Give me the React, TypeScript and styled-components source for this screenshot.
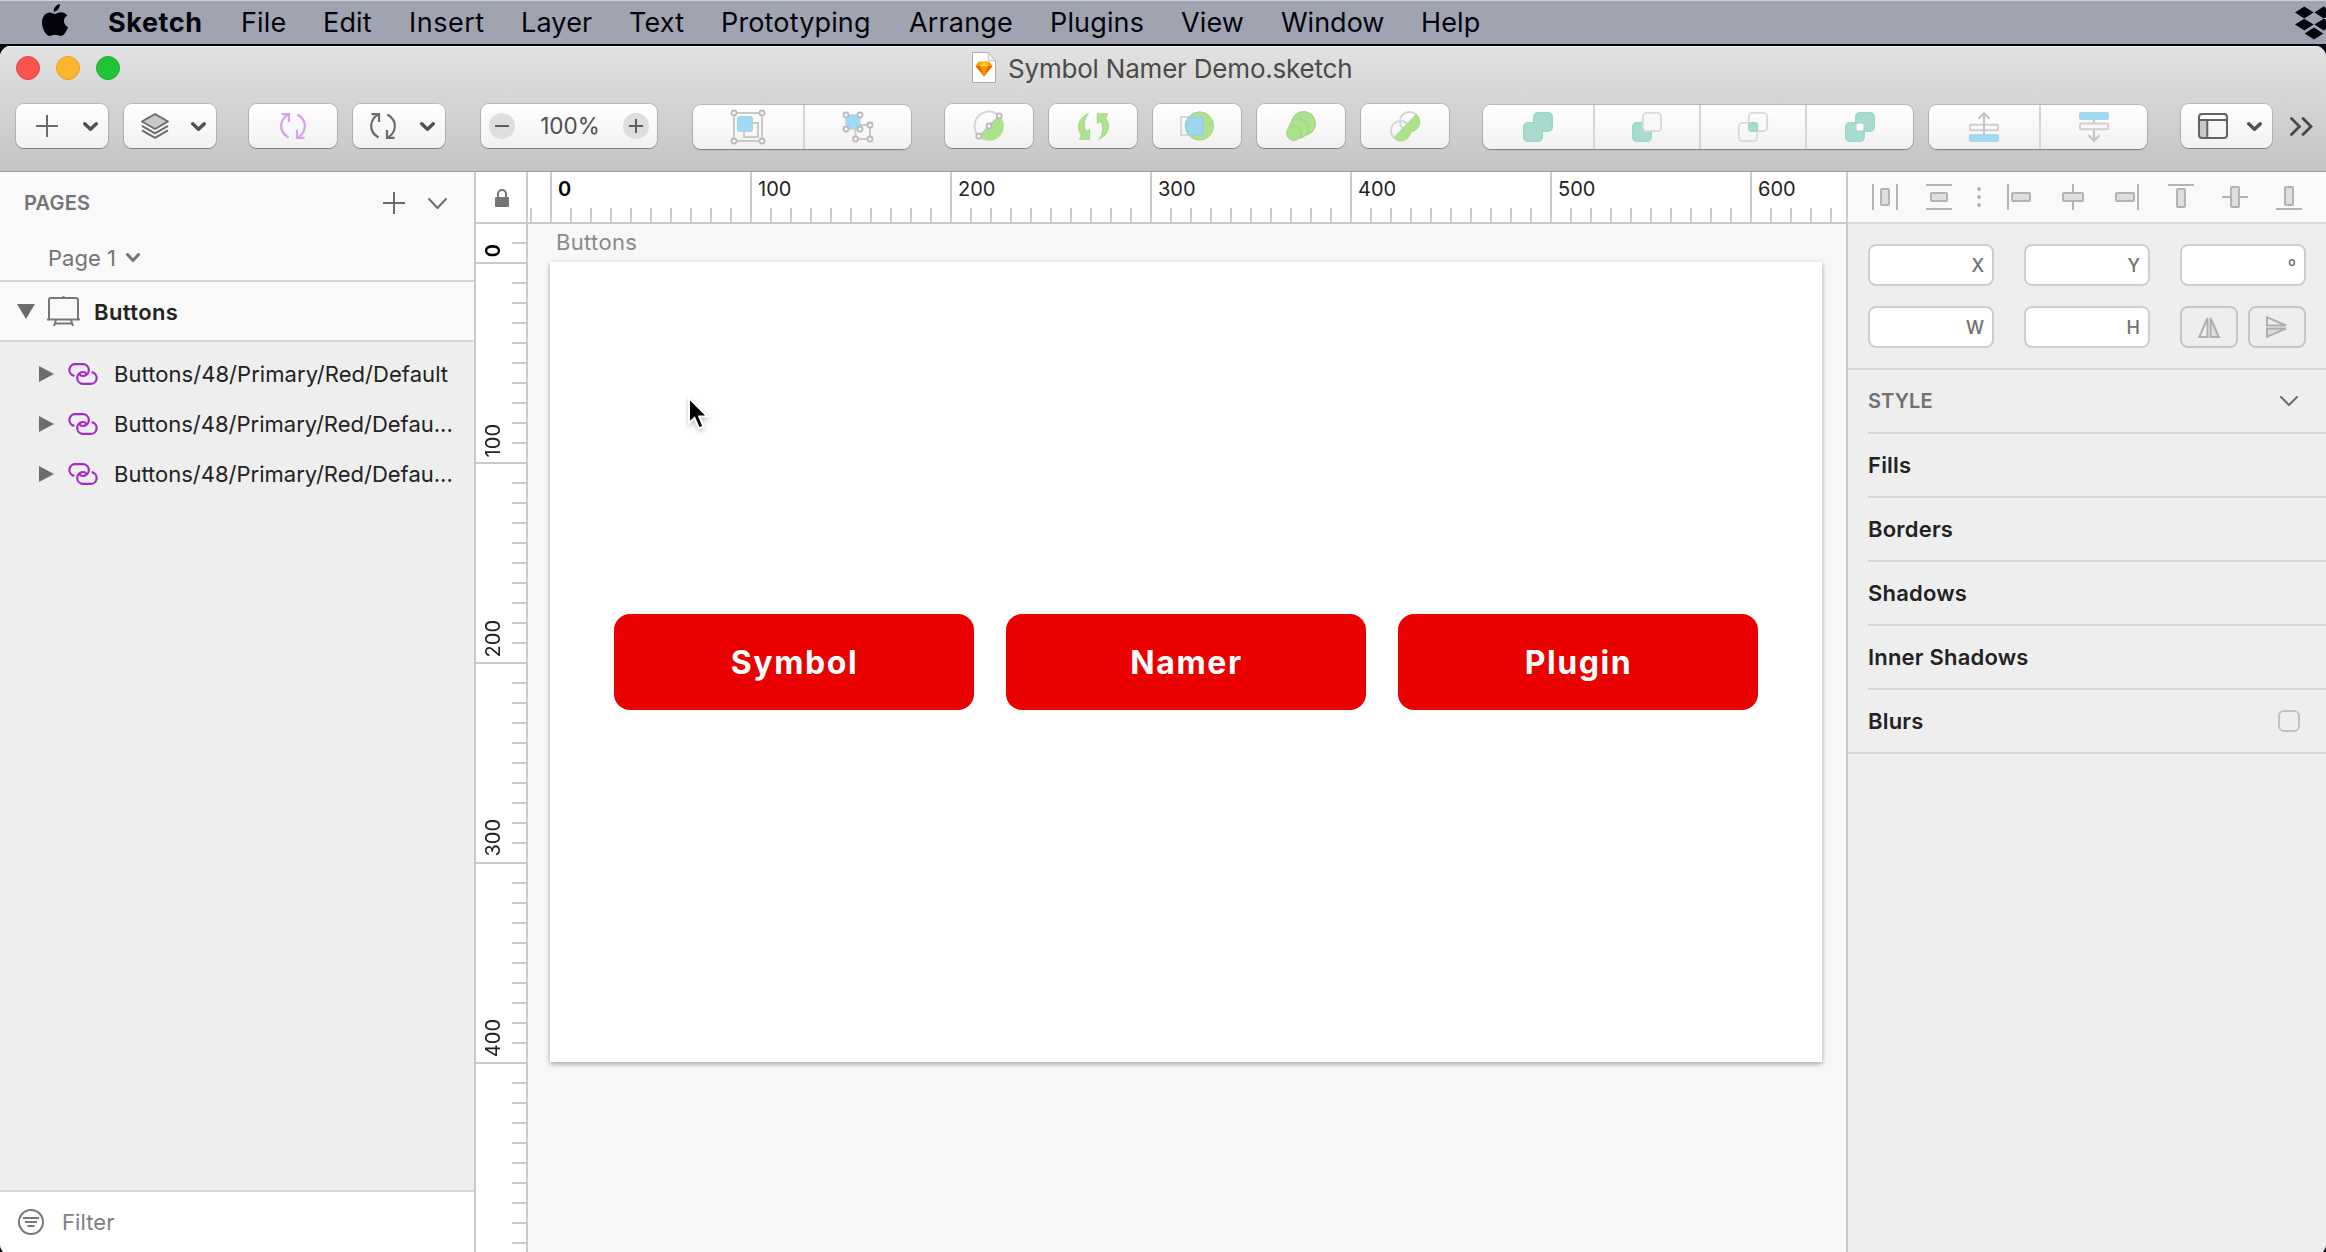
import React from "react";
import styled, { createGlobalStyle } from "styled-components";

const Global = createGlobalStyle`
  *, *::before, *::after { box-sizing: border-box; }
  html, body { margin: 0; padding: 0; background: #05060f; overflow: hidden; }
  body {
    font-family: Inter, "Liberation Sans", sans-serif;
    font-size: 22px;
    line-height: 1;
    color: #222;
  }
`;

const LINE = "#c9c9c9";
const GREEN = "#ade28d";
const BLUE = "#a0dbf5";
const TEAL = "#a9dbd2";
const MUTE = "#c9c9c9";

/* ---------- shell ---------- */

const Screen = styled.div`
  width: 2326px;
  height: 1252px;
  overflow: hidden;
  display: flex;
  flex-direction: column;
`;

const MenuBar = styled.header`
  flex: none;
  height: 44px;
  display: flex;
  align-items: center;
  padding-left: 42px;
  background: #a0a4b0;
  border-top: 1px solid #ccd0da;
  color: #04040e;
  font-size: 27px;
  overflow: hidden;
`;

const AppleMark = styled.svg`
  flex: none;
  width: 26px;
  height: 33px;
  margin: -5px 40px 0 0;
`;

const MenuItem = styled.span<{ $w: number; $ls?: number; $bold?: boolean }>`
  flex: none;
  width: ${(p) => p.$w}px;
  letter-spacing: ${(p) => p.$ls ?? 0.15}px;
  font-weight: ${(p) => (p.$bold ? 700 : 400)};
  white-space: nowrap;
`;

const DropboxMark = styled.svg`
  flex: none;
  width: 38px;
  height: 34px;
  margin: 1px -7px 0 auto;
`;

const Window = styled.main`
  flex: none;
  height: 1210px;
  margin-top: 2px;
  display: flex;
  flex-direction: column;
  border-radius: 11px 11px 12px 12px;
  overflow: hidden;
  background: #eee;
`;

const Chrome = styled.div`
  flex: none;
  height: 126px;
  background: linear-gradient(#e2e2e2, #c4c4c4);
  border-bottom: 1px solid #9c9c9c;
  box-shadow: inset 0 1px 0 #f3f3f3;
`;

const TitleRow = styled.div`
  height: 58px;
  display: flex;
  align-items: flex-start;
  padding: 6px 0 0 16px;
`;

const Lights = styled.div`
  display: flex;
  gap: 16px;
  margin-top: 4px;
  width: 956px;
`;

const Light = styled.i<{ $c: string; $b: string }>`
  width: 24px;
  height: 24px;
  border-radius: 50%;
  background: ${(p) => p.$c};
  border: 1px solid ${(p) => p.$b};
`;

const Title = styled.h1`
  margin: 4px 0 0 12px;
  font-size: 26px;
  font-weight: 400;
  letter-spacing: -0.2px;
  color: #4b4b4b;
`;

/* ---------- toolbar ---------- */

const Toolbar = styled.div`
  display: flex;
  align-items: flex-start;
`;

const Button = styled.div<{ $w: number; $gap: number; $drop?: boolean; $inset?: number }>`
  flex: none;
  width: ${(p) => p.$w}px;
  height: 44px;
  margin-left: ${(p) => p.$gap}px;
  padding: ${(p) => (p.$drop ? `0 10px 0 ${p.$inset ?? 17}px` : "0")};
  display: flex;
  align-items: center;
  justify-content: ${(p) => (p.$drop ? "space-between" : "center")};
  border-radius: 8px;
  background: linear-gradient(#fff, #f1f1f1);
  box-shadow: 0 0 0 1px rgba(0, 0, 0, 0.13), 0 1px 1px 0 rgba(0, 0, 0, 0.28);
`;

const Segmented = styled(Button)`
  margin-top: 1px;
  overflow: hidden;
`;

const Segment = styled.div<{ $w?: number }>`
  ${(p) => (p.$w ? `flex: none; width: ${p.$w}px;` : "flex: 1;")}
  height: 100%;
  display: flex;
  align-items: center;
  justify-content: center;
  & + & { border-left: 2px solid #d6d6d6; }
`;

const ZoomBox = styled(Button)`
  justify-content: space-between;
  padding: 0 8px;
  color: #4e4e4e;
`;

const ZoomValue = styled.span`
  padding-left: 2px;
  font-size: 22.5px;
`;

const Overflow = styled.div`
  flex: none;
  height: 44px;
  margin-left: 18px;
  display: flex;
  align-items: center;
`;

const Svg = styled.svg`
  flex: none;
  display: block;
  overflow: visible;
`;

type IconProps = { w: number; h: number; children: React.ReactNode };
const Icon = ({ w, h, children }: IconProps) => (
  <Svg width={w} height={h} viewBox={`0 0 ${w} ${h}`} fill="none">
    {children}
  </Svg>
);

const Chevron = ({ w = 15, h = 9, s = 3.4, c = "#505050" }) => (
  <Icon w={w} h={h}>
    <path
      d={`M${s / 2} ${s / 2}L${w / 2} ${h - s / 2}L${w - s / 2} ${s / 2}`}
      stroke={c}
      strokeWidth={s}
      strokeLinecap="round"
      strokeLinejoin="round"
    />
  </Icon>
);

const Plus = ({ size = 22, s = 2, c = "#6b6b6b" }) => (
  <Icon w={size} h={size}>
    <path d={`M${size / 2} 0V${size}M0 ${size / 2}H${size}`} stroke={c} strokeWidth={s} />
  </Icon>
);

const Rotate = ({ c }: { c: string }) => (
  <Icon w={26} h={26}>
    <g stroke={c} strokeWidth="2.2">
      <path d="M8.5 24.5C2.8 21 .8 16 1.2 12C1.6 7.5 4.5 3.6 8.6 1.4" />
      <path d="M1.5 1.2H9V9" />
      <path d="M17.5 1.5C23.2 5 25.2 10 24.8 14C24.4 18.5 21.5 22.4 17.4 24.6" />
      <path d="M24.5 24.8H17V17" />
    </g>
  </Icon>
);

const Handles = ({ pts, r = 2.5 }: { pts: number[][]; r?: number }) => (
  <g fill="#fafafa" stroke="#bababa" strokeWidth="1.8">
    {pts.map(([x, y]) => (
      <circle key={`${x}-${y}`} cx={x} cy={y} r={r} />
    ))}
  </g>
);

const ZoomDot = ({ plus }: { plus?: boolean }) => (
  <Icon w={26} h={26}>
    <circle cx="13" cy="13" r="13" fill="#dedede" />
    <path d={`M6 13H20${plus ? "M13 6V20" : ""}`} stroke="#606060" strokeWidth="2" />
  </Icon>
);

/* ---------- body ---------- */

const Body = styled.div`
  flex: 1;
  min-height: 0;
  display: flex;
`;

const Sidebar = styled.aside`
  flex: none;
  width: 476px;
  border-right: 2px solid ${LINE};
  display: flex;
  flex-direction: column;
`;

const Pages = styled.section`
  flex: none;
  height: 110px;
  background: #f9f9f9;
  border-bottom: 2px solid #d6d6d6;
`;

const PagesHead = styled.div`
  display: flex;
  align-items: center;
  height: 62px;
  padding: 0 27px 0 24px;
  font-size: 20px;
  font-weight: 600;
  letter-spacing: 0.2px;
  color: #747474;
`;

const HeadTools = styled.div`
  margin-left: auto;
  display: flex;
  align-items: center;
  gap: 23px;
`;

const PageName = styled.div`
  display: flex;
  align-items: center;
  gap: 10px;
  height: 46px;
  padding: 1px 0 0 48px;
  color: #747474;
`;

const ArtboardRow = styled.div`
  flex: none;
  height: 60px;
  display: flex;
  align-items: center;
  padding-left: 17px;
  background: #f9f9f9;
  border-bottom: 2px solid #d6d6d6;
  font-weight: 600;
`;

const RowLabel = styled.span<{ $gap: number; $ls?: number; $drop?: number }>`
  margin-left: ${(p) => p.$gap}px;
  padding-top: ${(p) => p.$drop ?? 0}px;
  letter-spacing: ${(p) => p.$ls ?? 0}px;
  white-space: nowrap;
`;

const Spacer = styled.i<{ $w: number }>`
  flex: none;
  width: ${(p) => p.$w}px;
`;

const LayerList = styled.div`
  flex: 1;
  padding-top: 7px;
`;

const LayerRow = styled.div`
  height: 50px;
  display: flex;
  align-items: center;
  padding-left: 39px;
`;

const Filter = styled.div`
  flex: none;
  height: 66px;
  display: flex;
  align-items: center;
  padding: 0 0 4px 18px;
  background: #fff;
  border-top: 2px solid #d6d6d6;
  color: #808080;
`;

const Editor = styled.section`
  flex: none;
  width: 1370px;
  display: grid;
  grid-template-columns: 52px 1fr;
  grid-template-rows: 52px 1fr;
`;

const Lock = styled.div`
  display: flex;
  align-items: center;
  justify-content: center;
  padding: 2px 0 0 2px;
  background: #fff;
  border-right: 2px solid ${LINE};
  border-bottom: 2px solid ${LINE};
`;

const RulerX = styled.div`
  display: flex;
  overflow: hidden;
  padding-left: 22px;
  border-bottom: 2px solid ${LINE};
  background: repeating-linear-gradient(90deg, ${LINE} 0 2px, transparent 2px 20px) 2px 36px / 1340px 14px no-repeat #fff;
`;

const MarkX = styled.div<{ $zero?: boolean }>`
  flex: none;
  width: 200px;
  height: 50px;
  padding: 7px 0 0 6px;
  border-left: 2px solid ${LINE};
  font-size: 20px;
  font-weight: ${(p) => (p.$zero ? 600 : 400)};
  color: ${(p) => (p.$zero ? "#000" : "#222")};
`;

const RulerY = styled.div`
  overflow: hidden;
  border-right: 2px solid ${LINE};
  background: repeating-linear-gradient(180deg, ${LINE} 0 2px, transparent 2px 20px) 36px 18px / 14px 1020px no-repeat #fff;
`;

const MarkY = styled.div<{ $zero?: boolean }>`
  height: ${(p) => (p.$zero ? 40 : 200)}px;
  display: flex;
  align-items: flex-end;
  padding: 0 0 5px 7px;
  border-bottom: 2px solid ${LINE};
  font-size: 20px;
  font-weight: ${(p) => (p.$zero ? 600 : 400)};
  color: ${(p) => (p.$zero ? "#000" : "#222")};
  span {
    writing-mode: vertical-rl;
    transform: rotate(180deg);
  }
`;

const Canvas = styled.div`
  position: relative;
  padding-left: 22px;
  background: #f7f7f7;
`;

const ArtboardName = styled.div`
  height: 38px;
  padding: 7px 0 0 6px;
  letter-spacing: 0.35px;
  color: #8a8a8a;
`;

const Artboard = styled.div`
  width: 1272px;
  height: 800px;
  display: flex;
  align-items: center;
  justify-content: center;
  gap: 32px;
  background: #fff;
  box-shadow: 0 2px 5px rgba(0, 0, 0, 0.34);
`;

const RedButton = styled.div`
  width: 360px;
  height: 96px;
  padding: 2px 0 0 1px;
  border-radius: 16px;
  display: flex;
  align-items: center;
  justify-content: center;
  background: #eb0000;
  color: #fff;
  font-size: 32px;
  font-weight: 650;
  letter-spacing: 1.6px;
`;

const Cursor = styled.svg`
  position: absolute;
  left: 158px;
  top: 169px;
  filter: drop-shadow(0 2px 2px rgba(0, 0, 0, 0.25));
`;

/* ---------- inspector ---------- */

const Inspector = styled.aside`
  flex: 1;
  border-left: 2px solid ${LINE};
  background: #eee;
`;

const AlignBar = styled.div`
  height: 52px;
  display: grid;
  grid-template-columns: 54px 54px 26px repeat(6, 54px);
  align-items: center;
  justify-items: center;
  padding-left: 10px;
  background: #f9f9f9;
  border-bottom: 2px solid #dcdcdc;
`;

const Fields = styled.div`
  height: 146px;
  padding: 20px;
  display: grid;
  grid-template-columns: repeat(3, 126px);
  grid-auto-rows: 42px;
  gap: 20px 30px;
  border-bottom: 2px solid #d6d6d6;
`;

const Field = styled.div`
  display: flex;
  align-items: center;
  justify-content: flex-end;
  padding: 1px 8px 0 0;
  background: #fff;
  border: 2px solid #cecece;
  border-radius: 8px;
  font-size: 18px;
  font-weight: 550;
  color: #707070;
`;

const FlipPair = styled.div`
  display: flex;
  gap: 10px;
`;

const Flip = styled.div`
  flex: 1;
  display: flex;
  align-items: center;
  justify-content: center;
  border: 2px solid #c6c6c6;
  border-radius: 8px;
`;

const StyleHead = styled.div`
  height: 64px;
  margin-left: 20px;
  padding-right: 28px;
  display: flex;
  align-items: center;
  justify-content: space-between;
  border-bottom: 2px solid #d6d6d6;
  font-size: 20px;
  font-weight: 600;
  letter-spacing: 0.1px;
  color: #707070;
`;

const StyleRow = styled.div<{ $last?: boolean }>`
  height: 64px;
  margin-left: ${(p) => (p.$last ? 0 : 20)}px;
  padding: 0 26px 0 ${(p) => (p.$last ? 20 : 0)}px;
  display: flex;
  align-items: center;
  justify-content: space-between;
  border-bottom: 2px solid #d6d6d6;
  font-weight: 600;
  letter-spacing: 0.2px;
`;

const Checkbox = styled.i`
  width: 22px;
  height: 22px;
  border: 2px solid #c2c2c2;
  border-radius: 6px;
`;

/* ---------- icons ---------- */

const Layers = () => (
  <Icon w={28} h={26}>
    <g stroke="#6b6b6b" strokeWidth="2" strokeLinejoin="round">
      <path d="M14 1L27 8.5L14 16L1 8.5Z" fill="#c9c9c9" />
      <path d="M1 12.8L14 20.3L27 12.8M1 17.3L14 24.8L27 17.3" />
    </g>
  </Icon>
);

const GroupIcon = () => (
  <Icon w={34} h={34}>
    <rect x="3" y="3" width="28" height="28" stroke={MUTE} strokeWidth="2" />
    <rect x="13" y="13" width="14" height="14" stroke={MUTE} strokeWidth="2" />
    <rect x="6.5" y="6.5" width="15" height="15" rx="2" fill={BLUE} stroke="#a9cfe0" />
    <Handles pts={[[3, 3], [31, 3], [3, 31], [31, 31]]} />
  </Icon>
);

const UngroupIcon = () => (
  <Icon w={30} h={30}>
    <rect x="12.5" y="13" width="14.5" height="14" stroke={MUTE} strokeWidth="2" />
    <rect x="3" y="3" width="14" height="14" fill={BLUE} stroke="#a9cfe0" />
    <Handles pts={[[3, 3], [17, 3], [3, 17], [17, 17], [27, 13], [12.5, 27], [27, 27]]} />
  </Icon>
);

const EditIcon = () => (
  <Icon w={30} h={30}>
    <path d="M4.8 25.2A14.2 14.2 0 0 1 25.2 4.8" stroke="#d6d6d6" strokeWidth="2" />
    <path d="M4.5 25.5A14.8 14.8 0 0 0 25.5 4.5Z" fill={GREEN} />
    <path d="M4.8 25.2L25.2 4.8" stroke="#c4c4c4" strokeWidth="1.5" />
    <Handles pts={[[4.8, 25.2], [15, 15], [25.2, 4.8]]} />
  </Icon>
);

const TransformIcon = () => (
  <Icon w={31} h={27}>
    <g fill={GREEN} stroke="#9dd07f" strokeWidth="0.8">
      <path d="M10.5 .5C4 3.5 .5 8 .5 14C.5 17.5 1.5 19.5 3.3 21.2L1.5 26.3H11.7V16.5L8.3 18.5C5 13.5 6 5.5 10.5 .5Z" />
      <path d="M20.5 26.5C27 23.5 30.5 19 30.5 13C30.5 9.5 29.5 7.5 27.7 5.8L29.5 .7H19.3V10.5L22.7 8.5C26 13.5 25 21.5 20.5 26.5Z" />
    </g>
  </Icon>
);

const MaskIcon = () => (
  <Icon w={34} h={30}>
    <circle cx="19.5" cy="15" r="14.2" fill={GREEN} stroke="#a6d68a" />
    <rect x="1" y="6" width="22" height="18" stroke="#cdd6de" strokeWidth="1.8" />
    <path d="M8.8 6H23V24H8.8A14.5 14.5 0 0 1 8.8 6Z" fill="#9ed6ee" stroke="#8cc6df" />
  </Icon>
);

const ScaleIcon = () => (
  <Icon w={30} h={30}>
    <g fill={GREEN} stroke="#9bd07d">
      <circle cx="17.5" cy="12.5" r="12" />
      <circle cx="12.5" cy="17.5" r="9.8" />
      <circle cx="7.8" cy="22.2" r="7.2" />
    </g>
  </Icon>
);

const FlattenIcon = () => (
  <Icon w={30} h={30}>
    <circle cx="19.5" cy="10.5" r="9.6" stroke="#d4d4d4" strokeWidth="1.8" />
    <circle cx="10.5" cy="19.5" r="9.6" stroke="#d4d4d4" strokeWidth="1.8" />
    <path
      d="M3.8 26.8L26.2 3.2C30.6 7 31 13.5 27.4 17.6C25 20 22 20.4 20.6 21.6C20 24.5 18.4 27.4 15.5 29C11.5 31 6.800 30.2 3.8 26.8Z"
      fill={GREEN}
      stroke="#a4d788"
      strokeWidth=".8"
    />
  </Icon>
);

const upper = { x: 10.8, y: 0.8, width: 18.4, height: 18.4, rx: 4 };
const lower = { x: 0.8, y: 10.8, width: 18.4, height: 18.4, rx: 4 };
const solid = { fill: TEAL, stroke: "#98dbc0", strokeWidth: 1.6 };
const ghost = { fill: "none", stroke: "#d8d8d8", strokeWidth: 1.8 };

const BoolIcon = ({ kind }: { kind: "union" | "subtract" | "intersect" | "difference" }) => (
  <Icon w={30} h={30}>
    {kind === "union" && (
      <>
        <rect {...upper} {...solid} />
        <rect {...lower} {...solid} />
        <rect x="11.6" y="10" width="6.8" height="10" fill={TEAL} />
      </>
    )}
    {kind === "subtract" && (
      <>
        <rect {...lower} {...solid} />
        <rect {...upper} {...ghost} fill="#f8f8f8" />
      </>
    )}
    {kind === "intersect" && (
      <>
        <rect {...upper} {...ghost} />
        <rect {...lower} {...ghost} />
        <rect x="10.8" y="10.8" width="8.4" height="8.4" rx="2.5" {...solid} />
      </>
    )}
    {kind === "difference" && (
      <>
        <rect {...upper} {...solid} />
        <rect {...lower} {...solid} />
        <rect x="11.5" y="11.5" width="7" height="7" rx="2" fill="#fafafa" />
      </>
    )}
  </Icon>
);

const Forward = () => (
  <Icon w={30} h={30}>
    <rect x="1" y="12.8" width="28" height="5.5" rx="1" stroke="#d0d0d0" strokeWidth="2" />
    <path d="M15 22V1.5M9.5 6.8L15 1.2L20.5 6.8" stroke="#c4c4c4" strokeWidth="2" />
    <rect x=".5" y="22.5" width="29" height="7" rx="1" fill={BLUE} stroke="#b4d5e4" />
  </Icon>
);

const Backward = () => (
  <Icon w={30} h={30}>
    <path d="M15 8V11M15 18V28.5M9.5 23.2L15 28.8L20.5 23.2" stroke="#c4c4c4" strokeWidth="2" />
    <rect x="1" y="11.5" width="28" height="5.8" rx="1" stroke="#d0d0d0" strokeWidth="2" />
    <rect x=".5" y=".5" width="29" height="7" rx="1" fill={BLUE} stroke="#b4d5e4" />
  </Icon>
);

const Panels = () => (
  <Icon w={30} h={26}>
    <path d="M2 7H9V25H2Z" fill="#c8c8c8" />
    <g stroke="#626262" strokeWidth="2">
      <rect x="1" y="1" width="28" height="24" rx="3" />
      <path d="M1 7H29M9.3 7V25" />
    </g>
  </Icon>
);

const AlignIcon = ({ w, h = 26, line, box }: { w: number; h?: number; line: string; box: number[] }) => (
  <Icon w={w} h={h}>
    <path d={line} stroke="#b3b3b3" strokeWidth="2" />
    <rect x={box[0]} y={box[1]} width={box[2]} height={box[3]} rx="1" fill="#dedede" stroke="#b3b3b3" strokeWidth="2" />
  </Icon>
);

const Link = () => (
  <Icon w={28} h={22}>
    <g stroke="#a32cc4" strokeWidth="2.2" strokeLinecap="round">
      <path d="M4.5 12.6A5.900 5.900 0 0 1 6.8 1.1H14A5.900 5.900 0 0 1 15 12.800C12.5 13.4 10.800 12.4 10.8 10.8" />
      <path d="M23.5 9.4A5.900 5.900 0 0 1 21.2 20.9H14A5.900 5.900 0 0 1 13 9.200C15.5 8.6 17.2 9.6 17.2 11.2" />
    </g>
  </Icon>
);

const menus: [string, number, number?][] = [
  ["File", 82],
  ["Edit", 86],
  ["Insert", 112, 0.5],
  ["Layer", 108],
  ["Text", 92],
  ["Prototyping", 188],
  ["Arrange", 141],
  ["Plugins", 131],
  ["View", 100],
  ["Window", 140, 0],
  ["Help", 80],
];

const layers = [
  "Buttons/48/Primary/Red/Default",
  "Buttons/48/Primary/Red/Defau...",
  "Buttons/48/Primary/Red/Defau...",
];

export default function App() {
  return (
    <Screen>
      <Global />
      <MenuBar>
        <AppleMark viewBox="0 0 26 33" fill="#04040e">
          <path d="M17.8 0C18.2 3.8 15.2 7.6 11.7 7.6C11.2 4 14.4 .5 17.8 0Z" />
          <path d="M13 10C14.5 10 16.3 8.3 19.2 8.3C21.8 8.3 24 9.7 25.2 11.6C20.4 14.5 21.2 21 26 23.2C24.8 26.8 21.8 32 18.7 32C16.6 32 15.8 30.8 13.2 30.8C10.6 30.8 9.7 32 7.7 32C4.2 32 0 25 0 18.5C0 12 4 8.5 7.7 8.5C10 8.5 11.6 10 13 10Z" />
        </AppleMark>
        <MenuItem $w={133} $ls={0.6} $bold>Sketch</MenuItem>
        {menus.map(([t, w, ls]) => (
          <MenuItem key={t} $w={w} $ls={ls}>{t}</MenuItem>
        ))}
        <DropboxMark viewBox="0 0 38 34" fill="#04040e">
          <path d="M0 6.5L9.3 .5L18.6 6.5L9.3 12.5ZM19.4 6.5L28.7 .5L38 6.5L28.7 12.5ZM0 18.5L9.3 12.7L18.6 18.5L9.3 24.5ZM19.4 18.5L28.7 12.7L38 18.5L28.7 24.5ZM9.7 27.5L19 21.5L28.3 27.5L19 33.5Z" />
        </DropboxMark>
      </MenuBar>

      <Window>
        <Chrome>
          <TitleRow>
            <Lights>
              <Light $c="#fb5450" $b="#e0443f" />
              <Light $c="#fdb62b" $b="#dfa023" />
              <Light $c="#22c33a" $b="#1caf31" />
            </Lights>
            <Icon w={24} h={31}>
              <path d="M.5 .5H16L23.5 9V30.5H.5Z" fill="#fff" stroke="#a9a9a9" />
              <path d="M16 .5L16.5 8.5L23.5 9Z" fill="#f1f1f1" stroke="#b9b9b9" strokeWidth=".8" />
              <path d="M7 9.5H17L20.5 14L12 24.5L3.5 14Z" fill="#fdad00" />
              <path d="M3.5 14H20.5L12 24.5Z" fill="#ea6c00" />
              <path d="M8 14H16L12 24.5ZM7 9.5L8 14H3.5ZM17 9.5L16 14H20.5Z" fill="#fd9a0c" />
              <path d="M12 9.5L16 14H8Z" fill="#fdd231" />
            </Icon>
            <Title>Symbol Namer Demo.sketch</Title>
          </TitleRow>

          <Toolbar>
            <Button $w={92} $gap={16} $inset={20} $drop><Plus /><Chevron /></Button>
            <Button $w={92} $gap={16} $drop><Layers /><Chevron /></Button>
            <Button $w={88} $gap={33}><Rotate c="#d79fe8" /></Button>
            <Button $w={92} $gap={16} $drop><Rotate c="#6b6b6b" /><Chevron /></Button>
            <ZoomBox $w={176} $gap={36}>
              <ZoomDot />
              <ZoomValue>100%</ZoomValue>
              <ZoomDot plus />
            </ZoomBox>
            <Segmented $w={218} $gap={36}>
              <Segment $w={110}><GroupIcon /></Segment>
              <Segment><UngroupIcon /></Segment>
            </Segmented>
            <Button $w={88} $gap={34}><EditIcon /></Button>
            <Button $w={88} $gap={16}><TransformIcon /></Button>
            <Button $w={88} $gap={16}><MaskIcon /></Button>
            <Button $w={88} $gap={16}><ScaleIcon /></Button>
            <Button $w={88} $gap={16}><FlattenIcon /></Button>
            <Segmented $w={430} $gap={34}>
              <Segment $w={110}><BoolIcon kind="union" /></Segment>
              <Segment $w={106}><BoolIcon kind="subtract" /></Segment>
              <Segment $w={106}><BoolIcon kind="intersect" /></Segment>
              <Segment><BoolIcon kind="difference" /></Segment>
            </Segmented>
            <Segmented $w={218} $gap={16}>
              <Segment $w={110}><Forward /></Segment>
              <Segment><Backward /></Segment>
            </Segmented>
            <Button $w={91} $gap={34} $drop><Panels /><Chevron /></Button>
            <Overflow>
              <Icon w={22} h={18}>
                <path d="M1.5 1.5L9.5 9.5L1.5 17.5M13 1.5L21 9.5L13 17.5" stroke="#484848" strokeWidth="2.8" strokeLinecap="round" />
              </Icon>
            </Overflow>
          </Toolbar>
        </Chrome>

        <Body>
          <Sidebar>
            <Pages>
              <PagesHead>
                PAGES
                <HeadTools>
                  <Plus />
                  <Chevron w={19} h={11} s={2} c="#6e6e6e" />
                </HeadTools>
              </PagesHead>
              <PageName>
                Page 1
                <Chevron w={14} h={9} s={3} c="#747474" />
              </PageName>
            </Pages>
            <ArtboardRow>
              <Icon w={18} h={15}><path d="M0 0H18L9 15Z" fill="#6c6c6c" /></Icon>
              <Spacer $w={12} />
              <Icon w={33} h={30}>
                <g stroke="#777" strokeWidth="2">
                  <path d="M2 23V4A2 2 0 0 1 4 2H29A2 2 0 0 1 31 4V23M0 23.5H33M16.5 0V2" />
                  <path d="M9 24L7 30M24 24L26 30M8 27.5H25" />
                </g>
              </Icon>
              <RowLabel $gap={14} $ls={0.4} $drop={2}>Buttons</RowLabel>
            </ArtboardRow>
            <LayerList>
              {layers.map((name, i) => (
                <LayerRow key={i}>
                  <Icon w={15} h={16}><path d="M0 0L15 8L0 16Z" fill="#6c6c6c" /></Icon>
                  <Spacer $w={15} />
                  <Link />
                  <RowLabel $gap={17} $ls={i === 0 ? 0.05 : 0}>{name}</RowLabel>
                </LayerRow>
              ))}
            </LayerList>
            <Filter>
              <Icon w={26} h={26}>
                <circle cx="13" cy="13" r="12" stroke="#777" strokeWidth="2" />
                <path d="M5 9H21M7 13H19M9.5 17H16.5" stroke="#777" strokeWidth="2" />
              </Icon>
              <RowLabel $gap={18} $ls={0.1}>Filter</RowLabel>
            </Filter>
          </Sidebar>

          <Editor>
            <Lock>
              <Icon w={14} h={18}>
                <path d="M3 9V5A4 4 0 0 1 11 5V9" stroke="#757575" strokeWidth="2" />
                <rect y="8" width="14" height="10" rx="1" fill="#757575" />
              </Icon>
            </Lock>
            <RulerX>
              {[0, 100, 200, 300, 400, 500, 600].map((n) => (
                <MarkX key={n} $zero={n === 0}>{n}</MarkX>
              ))}
            </RulerX>
            <RulerY>
              {[0, 100, 200, 300, 400].map((n) => (
                <MarkY key={n} $zero={n === 0}><span>{n}</span></MarkY>
              ))}
            </RulerY>
            <Canvas>
              <ArtboardName>Buttons</ArtboardName>
              <Artboard>
                <RedButton>Symbol</RedButton>
                <RedButton>Namer</RedButton>
                <RedButton>Plugin</RedButton>
              </Artboard>
              <Cursor width="26" height="38" viewBox="0 0 26 38">
                <path d="M3 5L3 30L8.5 25L13 35.5L17.5 33.5L13.2 23.5H21.5Z" fill="#000" stroke="#fff" strokeWidth="2" />
              </Cursor>
            </Canvas>
          </Editor>

          <Inspector>
            <AlignBar>
              <AlignIcon w={26} line="M1 0V26M25 0V26" box={[9, 5, 8, 16]} />
              <AlignIcon w={26} line="M0 1H26M0 25H26" box={[5, 9, 16, 8]} />
              <Icon w={4} h={20}>
                <g fill="#b3b3b3">
                  <circle cx="2" cy="2" r="2" />
                  <circle cx="2" cy="10" r="2" />
                  <circle cx="2" cy="18" r="2" />
                </g>
              </Icon>
              <AlignIcon w={24} line="M1 0V26" box={[5, 9, 18, 8]} />
              <AlignIcon w={22} line="M11 0V26" box={[1, 9, 20, 8]} />
              <AlignIcon w={24} line="M23 0V26" box={[1, 9, 18, 8]} />
              <AlignIcon w={26} line="M0 1H26" box={[9, 5, 8, 18]} />
              <AlignIcon w={26} line="M0 13H26" box={[9, 3, 8, 20]} />
              <AlignIcon w={26} line="M0 25H26" box={[9, 3, 8, 18]} />
            </AlignBar>
            <Fields>
              <Field>X</Field>
              <Field>Y</Field>
              <Field>º</Field>
              <Field>W</Field>
              <Field>H</Field>
              <FlipPair>
                <Flip>
                  <Icon w={22} h={22}>
                    <g stroke="#afafaf" strokeWidth="2">
                      <path d="M9.5 2V21H1.2Z" />
                      <path d="M12.5 2V21H20.8Z" fill="#dcdcdc" />
                    </g>
                  </Icon>
                </Flip>
                <Flip>
                  <Icon w={22} h={22}>
                    <g stroke="#afafaf" strokeWidth="2">
                      <path d="M1 9.5H20L1 1.2Z" />
                      <path d="M1 12.5H20L1 20.8Z" fill="#dcdcdc" />
                    </g>
                  </Icon>
                </Flip>
              </FlipPair>
            </Fields>
            <StyleHead>
              STYLE
              <Chevron w={18} h={10} s={2} c="#6e6e6e" />
            </StyleHead>
            <StyleRow>Fills</StyleRow>
            <StyleRow>Borders</StyleRow>
            <StyleRow>Shadows</StyleRow>
            <StyleRow>Inner Shadows</StyleRow>
            <StyleRow $last>Blurs<Checkbox /></StyleRow>
          </Inspector>
        </Body>
      </Window>
    </Screen>
  );
}
